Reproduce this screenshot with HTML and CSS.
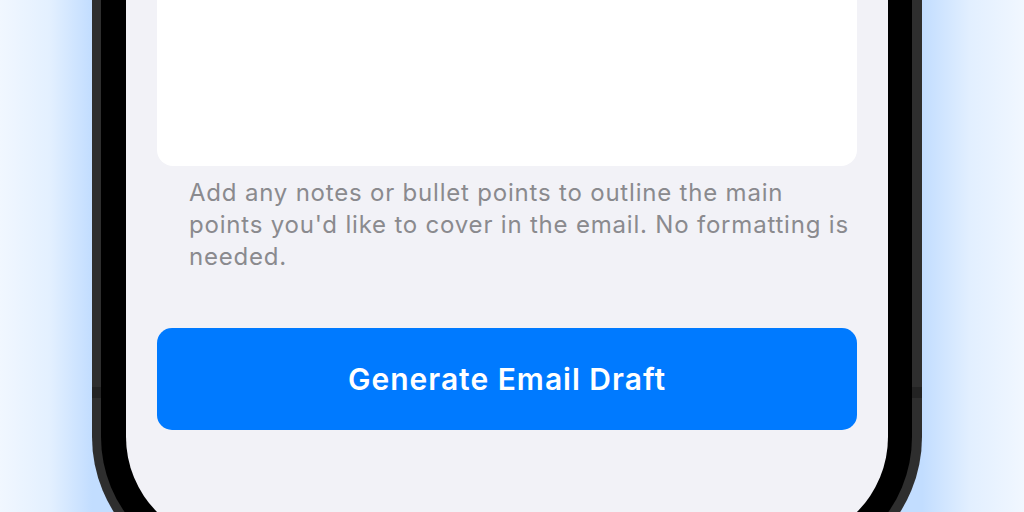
FILE: index.html
```html
<!DOCTYPE html>
<html lang="en">
<head>
<meta charset="utf-8">
<title>Email Draft</title>
<link rel="stylesheet" href="styles.css">
</head>
<body>
<div class="stage">
  <div class="phone">
    <div class="bezel">
      <div class="screen">
        <div class="card"></div>
        <p class="caption">Add any notes or bullet points to outline the main points you'd like to cover in the email. No formatting is needed.</p>
        <button class="primary">Generate Email Draft</button>
      </div>
    </div>
  </div>
</div>
</body>
</html>
```
FILE: styles.css
```css
html, body {
  margin: 0;
  padding: 0;
}
body {
  width: 1024px;
  height: 512px;
  overflow: hidden;
  background: linear-gradient(90deg, #f1f7ff 0px, #e3f0ff 50px, #c2ddff 92px, #c2ddff 922px, #e2efff 970px, #f1f7ff 1024px);
  font-family: Inter, "Noto Sans", "Liberation Sans", sans-serif;
}
.stage {
  display: flex;
  padding-left: 92px;
}
.phone {
  position: relative;
  width: 830px;
  margin-top: -300px;
  padding: 9px 10px 9px 9px;
  box-sizing: border-box;
  background: #2e2e2e;
  border-radius: 0 0 140px 140px;
}
.phone::before,
.phone::after {
  content: "";
  position: absolute;
  top: 687px;
  width: 9px;
  height: 11px;
  background: #232323;
}
.phone::before { left: 0; }
.phone::after { right: 0; width: 10px; }
.bezel {
  background: #000;
  padding: 25px 24px 25px 25px;
  border-radius: 0 0 131px 131px;
}
.screen {
  background: #f2f2f7;
  border-radius: 0 0 106px 106px;
  padding: 0 31px 113px;
  display: flex;
  flex-direction: column;
}
.card {
  height: 432px;
  background: #fff;
  border-radius: 0 0 16px 16px;
}
.caption {
  margin: 11px 0 0;
  padding: 0 0 0 32px;
  font-size: 24px;
  line-height: 32px;
  letter-spacing: 0.8px;
  color: #8a8a8e;
}
.primary {
  margin-top: 55px;
  height: 102px;
  border: 0;
  border-radius: 15px;
  background: #007aff;
  color: #fff;
  font-family: Inter, "Noto Sans", "Liberation Sans", sans-serif;
  font-size: 30px;
  font-weight: 600;
  letter-spacing: 1px;
}
```
